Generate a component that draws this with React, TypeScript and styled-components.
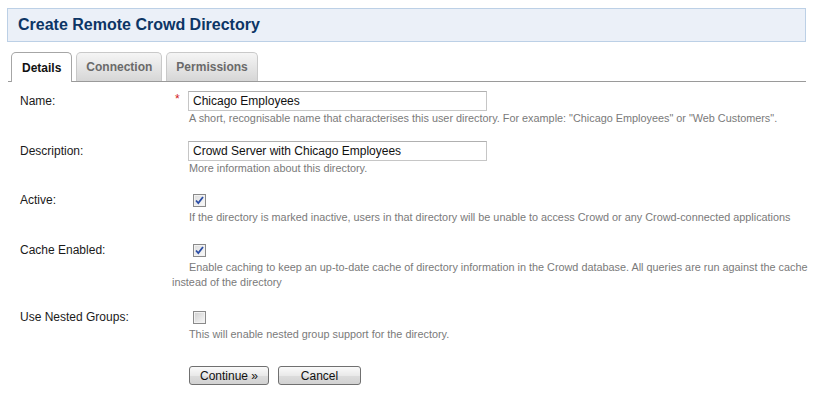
import React from "react";
import styled, { createGlobalStyle } from "styled-components";

const Global = createGlobalStyle`
  html, body { margin: 0; padding: 0; background: #fff; }
  body { font-family: "Liberation Sans", Arial, sans-serif; font-size: 12px; color: #222; }
`;

const Page = styled.div`
  padding: 8px 7px 0 7px;
`;

const Header = styled.div`
  height: 32px;
  border: 1px solid #bcd0e6;
  background: #ebf0f8;
  display: flex;
  align-items: center;
  padding-left: 10px;
`;

const Title = styled.h1`
  margin: 0;
  font-size: 16px;
  font-weight: bold;
  color: #0c3565;
`;

const TabBar = styled.div`
  margin-top: 10px;
  margin-left: 1px;
  display: flex;
  align-items: flex-end;
  gap: 4px;
  padding-left: 3px;
  border-bottom: 1px solid #9a9a9a;
  height: 29px;
`;

const Tab = styled.div<{ $active?: boolean }>`
  box-sizing: border-box;
  padding: 0 ${(p) => (p.$active ? "10px" : "9px")};
  display: flex;
  align-items: center;
  font-weight: bold;
  font-size: 12px;
  border-radius: 5px 5px 0 0;
  border: 1px solid ${(p) => (p.$active ? "#a6a6a6" : "#c9c9c9")};
  border-bottom: none;
  color: ${(p) => (p.$active ? "#111" : "#6a6a6a")};
  background: ${(p) =>
    p.$active ? "#fff" : "linear-gradient(#f5f5f5, #d6d6d6)"};
  margin-bottom: ${(p) => (p.$active ? "-1px" : "0")};
  height: ${(p) => (p.$active ? "30px" : "29px")};
`;

const Form = styled.div`
  padding: 9px 0 0 13px;
`;

const Row = styled.div<{ $after: number }>`
  display: flex;
  margin-bottom: ${(p) => p.$after}px;
`;

const Label = styled.div`
  width: 152px;
  flex: none;
  line-height: 20px;
  color: #1a1a1a;
`;

const Field = styled.div`
  flex: 1;
  margin-right: -6px;
`;

const Control = styled.div`
  display: flex;
  align-items: center;
  height: 20px;
`;

const Required = styled.span`
  width: 16px;
  color: #d21a1a;
  font-size: 12px;
  padding-left: 3px;
  box-sizing: border-box;
  position: relative;
  top: -2px;
`;

const TextInput = styled.div`
  box-sizing: border-box;
  width: 299px;
  height: 20px;
  border: 1px solid #c6c6c6;
  border-top-color: #b0b0b0;
  padding: 0 4px;
  font-size: 12px;
  line-height: 18px;
  color: #111;
  white-space: nowrap;
  overflow: hidden;
`;

const Help = styled.div<{ $indent?: boolean }>`
  font-size: 10.85px;
  line-height: 15px;
  color: #7a7a7a;
  padding-left: ${(p) => (p.$indent ? "0" : "17px")};
  text-indent: ${(p) => (p.$indent ? "17px" : "0")};
`;

const Box = styled.span<{ $checked?: boolean }>`
  margin-left: 21px;
  width: 13px;
  height: 13px;
  box-sizing: border-box;
  border: 1px solid #8a8a8a;
  background: ${(p) =>
    p.$checked
      ? "linear-gradient(135deg, #dcdcdc, #fbfbfb)"
      : "linear-gradient(135deg, #cfcfcf, #f8f8f8)"};
  box-shadow: inset 0 0 0 1px #f2f2f2;
  display: flex;
  align-items: center;
  justify-content: center;
`;

const Buttons = styled.div`
  display: flex;
  gap: 9px;
  padding-left: 17px;
`;

const Button = styled.div<{ $w: number }>`
  width: ${(p) => p.$w}px;
  height: 19px;
  box-sizing: border-box;
  border: 1px solid #707070;
  border-radius: 3px;
  background: linear-gradient(#fafafa, #e9e9e9 50%, #dcdcdc 51%, #d2d2d2);
  display: flex;
  align-items: center;
  justify-content: center;
  font-size: 12px;
  color: #111;
`;

const Check = ({ checked }: { checked?: boolean }) => (
  <Box $checked={checked}>
    {checked && (
      <svg width="9" height="9" viewBox="0 0 9 9">
        <path d="M1 4.5 L3.3 7 L8 1" fill="none" stroke="#2b4ea6" strokeWidth="1.8" />
      </svg>
    )}
  </Box>
);

export default function App() {
  return (
    <Page>
      <Global />
      <Header>
        <Title>Create Remote Crowd Directory</Title>
      </Header>
      <TabBar>
        <Tab $active>Details</Tab>
        <Tab>Connection</Tab>
        <Tab>Permissions</Tab>
      </TabBar>
      <Form>
        <Row $after={15}>
          <Label>Name:</Label>
          <Field>
            <Control>
              <Required>*</Required>
              <TextInput>Chicago Employees</TextInput>
            </Control>
            <Help>
              A short, recognisable name that characterises this user directory. For example: "Chicago Employees" or "Web Customers".
            </Help>
          </Field>
        </Row>
        <Row $after={14}>
          <Label>Description:</Label>
          <Field>
            <Control>
              <Required />
              <TextInput>Crowd Server with Chicago Employees</TextInput>
            </Control>
            <Help>More information about this directory.</Help>
          </Field>
        </Row>
        <Row $after={15}>
          <Label>Active:</Label>
          <Field>
            <Control>
              <Check checked />
            </Control>
            <Help $indent>
              If the directory is marked inactive, users in that directory will be unable to access Crowd or any Crowd-connected applications
            </Help>
          </Field>
        </Row>
        <Row $after={17}>
          <Label>Cache Enabled:</Label>
          <Field>
            <Control>
              <Check checked />
            </Control>
            <Help $indent>
              Enable caching to keep an up-to-date cache of directory information in the Crowd database. All queries are run against the cache instead of the directory
            </Help>
          </Field>
        </Row>
        <Row $after={24}>
          <Label>Use Nested Groups:</Label>
          <Field>
            <Control>
              <Check />
            </Control>
            <Help $indent>This will enable nested group support for the directory.</Help>
          </Field>
        </Row>
        <Row $after={0}>
          <Label />
          <Field>
            <Buttons>
              <Button $w={80}>Continue »</Button>
              <Button $w={83}>Cancel</Button>
            </Buttons>
          </Field>
        </Row>
      </Form>
    </Page>
  );
}
